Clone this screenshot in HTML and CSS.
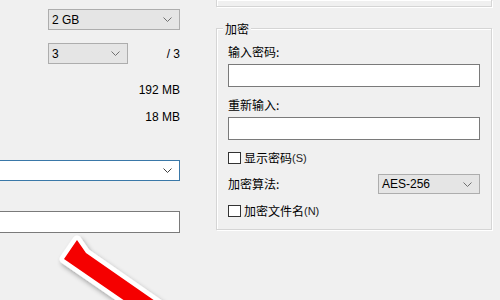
FILE: index.html
```html
<!DOCTYPE html>
<html lang="zh-CN">
<head>
<meta charset="utf-8">
<title>添加到压缩包</title>
<link rel="stylesheet" href="styles.css">
</head>
<body>
<div class="screen">
  <div class="left">
    <div class="combo size"><span>2 GB</span><svg class="chev" width="9" height="5" viewBox="0 0 9 5"><path d="M0.5 0.5 L4.5 4.5 L8.5 0.5" fill="none" stroke="#707070" stroke-width="1"/></svg></div>
    <div class="row threads">
      <div class="combo small"><span>3</span><svg class="chev" width="9" height="5" viewBox="0 0 9 5"><path d="M0.5 0.5 L4.5 4.5 L8.5 0.5" fill="none" stroke="#707070" stroke-width="1"/></svg></div>
      <span class="val">/ 3</span>
    </div>
    <div class="val mem1">192 MB</div>
    <div class="val mem2">18 MB</div>
    <div class="combo edit focus"><span></span><svg class="chev" width="9" height="5" viewBox="0 0 9 5"><path d="M0.5 0.5 L4.5 4.5 L8.5 0.5" fill="none" stroke="#404040" stroke-width="1"/></svg></div>
    <div class="textbox params"></div>
  </div>
  <div class="right">
    <div class="group top-group"></div>
    <div class="group enc">
      <div class="group-title">加密</div>
      <div class="label first">输入密码:</div>
      <div class="textbox pw"></div>
      <div class="label second">重新输入:</div>
      <div class="textbox pw"></div>
      <div class="check show"><span class="box"></span><span class="cjk">显示密码</span><span class="lat">(S)</span></div>
      <div class="algo">
        <span class="label">加密算法:</span>
        <div class="combo method"><span>AES-256</span><svg class="chev" width="9" height="5" viewBox="0 0 9 5"><path d="M0.5 0.5 L4.5 4.5 L8.5 0.5" fill="none" stroke="#707070" stroke-width="1"/></svg></div>
      </div>
      <div class="check names"><span class="box"></span><span class="cjk">加密文件名</span><span class="lat">(N)</span></div>
    </div>
  </div>
  <svg class="arrow" width="500" height="300" viewBox="0 0 500 300">
    <defs>
      <filter id="sh" x="-20%" y="-20%" width="140%" height="140%">
        <feGaussianBlur in="SourceAlpha" stdDeviation="2.5"/>
        <feOffset dx="2" dy="3" result="b"/>
        <feComponentTransfer><feFuncA type="linear" slope="0.35"/></feComponentTransfer>
        <feMerge><feMergeNode/><feMergeNode in="SourceGraphic"/></feMerge>
      </filter>
    </defs>
    <polygon points="64,259 77,240 86,253 168,310 138,310" fill="#f50000" stroke="#ffffff" stroke-width="9" stroke-linejoin="round" paint-order="stroke" filter="url(#sh)"/>
  </svg>
</div>
</body>
</html>
```

FILE: styles.css
```css
html, body {
  margin: 0;
  padding: 0;
}
body {
  background: #f0f0f0;
  font-family: "Noto Sans", "Noto Sans CJK SC", sans-serif;
  font-size: 12px;
  color: #000;
}
.screen {
  position: relative;
  width: 500px;
  height: 300px;
  overflow: hidden;
  background: #f0f0f0;
  display: grid;
  grid-template-columns: 216px 1fr;
}
.left {
  display: flex;
  flex-direction: column;
  align-items: flex-end;
  padding: 9px 36px 0 0;
}
.combo {
  box-sizing: border-box;
  display: flex;
  align-items: center;
  justify-content: space-between;
  background: #e5e5e5;
  border: 1px solid #adadad;
  padding: 0 7px 0 3px;
  line-height: 16px;
  font-family: "Liberation Sans", "Noto Sans CJK SC", sans-serif;
  font-size: 12px;
}
.chev {
  display: block;
}
.size {
  width: 132px;
  height: 21px;
}
.row {
  display: flex;
  align-items: center;
  justify-content: space-between;
}
.threads {
  width: 132px;
  height: 21px;
  margin-top: 13px;
}
.small {
  width: 80px;
  height: 21px;
}
.val {
  font-family: "Liberation Sans", sans-serif;
  font-size: 12px;
  line-height: 16px;
}
.mem1 {
  margin-top: 18px;
}
.mem2 {
  margin-top: 11px;
}
.edit {
  align-self: stretch;
  height: 21px;
  margin-top: 35px;
  background: #fff;
  border: 1px solid #3a78a8;
  border-left: 0;
}
.textbox {
  box-sizing: border-box;
  background: #fff;
  border: 1px solid #7a7a7a;
}
.params {
  align-self: stretch;
  height: 22px;
  margin-top: 30px;
  border-left: 0;
}
.right {
  display: flex;
  flex-direction: column;
  padding-right: 8px;
}
.group {
  border: 1px solid #d5d5d5;
  box-shadow: inset 1px 1px 0 #fff, 1px 1px 0 #fff;
}
.top-group {
  height: 6px;
  border-top: 0;
}
.enc {
  margin-top: 21px;
  padding: 0 11px 10px 11px;
  display: flex;
  flex-direction: column;
  font-family: "Noto Sans CJK SC", sans-serif;
}
.group-title {
  align-self: flex-start;
  margin: -8px 0 0 -5px;
  padding: 0 2px;
  background: #f0f0f0;
  line-height: 16px;
}
.label {
  line-height: 16px;
}
.label.first {
  margin-top: 7px;
}
.pw {
  height: 23px;
  margin-top: 4px;
}
.label.second {
  margin-top: 10px;
}
.check {
  display: flex;
  align-items: center;
  height: 16px;
  line-height: 16px;
}
.check .box {
  box-sizing: border-box;
  width: 13px;
  height: 12px;
  border: 1px solid #333;
  background: #fff;
  margin-right: 3px;
}
.check .lat {
  font-family: "Liberation Sans", sans-serif;
  font-size: 11px;
  color: #222;
}
.show {
  margin-top: 10px;
}
.algo {
  display: flex;
  align-items: center;
  justify-content: space-between;
  margin-top: 8px;
}
.method {
  width: 102px;
  height: 20px;
}
.names {
  margin-top: 9px;
}
.arrow {
  position: absolute;
  left: 0;
  top: 0;
  pointer-events: none;
}
```
